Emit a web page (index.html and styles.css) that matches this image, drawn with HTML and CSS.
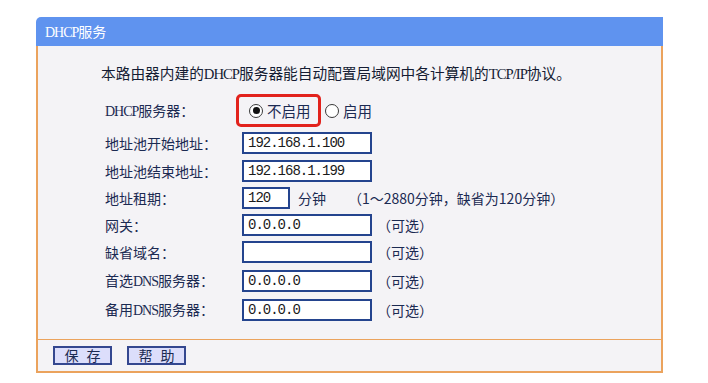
FILE: index.html
```html
<!DOCTYPE html>
<html lang="zh-CN">
<head>
<meta charset="utf-8">
<title>DHCP服务</title>
<link rel="stylesheet" href="styles.css">
</head>
<body>
<div class="panel">
  <div class="panel-head"><span class="lat">DHCP</span>服务</div>
  <div class="panel-body">
    <div class="content">
      <p class="desc">本路由器内建的<span class="lat">DHCP</span>服务器能自动配置局域网中各计算机的<span class="lat">TCP/IP</span>协议。</p>
      <div class="form">
        <div class="label"><span class="lat">DHCP</span>服务器：</div>
        <div class="radios">
          <div class="highlight">
            <span class="radio checked"></span><span class="radio-text">不启用</span>
          </div>
          <span class="radio"></span><span class="radio-text">启用</span>
        </div>

        <div class="label">地址池开始地址：</div>
        <div class="field"><span class="input">192.168.1.100</span></div>

        <div class="label">地址池结束地址：</div>
        <div class="field"><span class="input">192.168.1.199</span></div>

        <div class="label">地址租期：</div>
        <div class="field"><span class="input short">120</span><span class="unit">分钟</span><span class="note">（1～2880分钟，缺省为120分钟）</span></div>

        <div class="label">网关：</div>
        <div class="field"><span class="input">0.0.0.0</span><span class="opt">（可选）</span></div>

        <div class="label">缺省域名：</div>
        <div class="field"><span class="input"></span><span class="opt">（可选）</span></div>

        <div class="label">首选<span class="lat">DNS</span>服务器：</div>
        <div class="field"><span class="input">0.0.0.0</span><span class="opt">（可选）</span></div>

        <div class="label">备用<span class="lat">DNS</span>服务器：</div>
        <div class="field"><span class="input">0.0.0.0</span><span class="opt">（可选）</span></div>
      </div>
    </div>
    <div class="footer">
      <button class="btn">保存</button>
      <button class="btn">帮助</button>
    </div>
  </div>
</div>
</body>
</html>
```

FILE: styles.css
```css
html, body {
  margin: 0;
  padding: 0;
  background: #ffffff;
}

body {
  font-family: "Noto Sans CJK SC", "Noto Sans", sans-serif;
  color: #1b2a52;
}

.lat {
  font-family: "Liberation Serif", "Noto Sans CJK SC", serif;
  letter-spacing: -1px;
  font-size: 1em;
}

.panel {
  width: 627px;
  margin: 17px 0 0 36px;
}

.panel-head {
  height: 29px;
  line-height: 29px;
  background: #5f93ef;
  border-top-left-radius: 5px;
  color: #ffffff;
  font-size: 14px;
  padding-left: 9px;
}

.panel-body {
  background: #f4f3f6;
  border: 2px solid #eba35d;
  border-top: 0;
}

.content {
  padding: 16px 0 16.5px 0;
}

.desc {
  margin: 0;
  padding-left: 63px;
  font-size: 14.7px;
  line-height: 22px;
  color: #151c33;
}

.form {
  margin-top: 9px;
  padding-left: 67px;
  display: grid;
  grid-template-columns: 137px auto;
  row-gap: 5.3px;
  align-items: center;
}

.label {
  font-size: 14px;
  line-height: 22px;
}

.radios {
  display: flex;
  align-items: center;
  height: 33px;
  margin-left: -6px;
  font-size: 14.5px;
}

.highlight {
  display: flex;
  align-items: center;
  box-sizing: border-box;
  height: 33px;
  width: 85px;
  border: 3px solid #e2221c;
  border-radius: 5px;
  padding-left: 10px;
  margin-right: 4px;
}

.radio {
  box-sizing: border-box;
  width: 14px;
  height: 14px;
  border: 1px solid #3a3a3a;
  border-radius: 50%;
  background: #ffffff;
  display: flex;
  align-items: center;
  justify-content: center;
  flex: none;
}

.radio.checked::after {
  content: "";
  width: 7px;
  height: 7px;
  border-radius: 50%;
  background: #111111;
}

.radio-text {
  margin-left: 4px;
  line-height: 22px;
}

.field {
  display: flex;
  align-items: center;
  height: 22px;
}

.input {
  box-sizing: border-box;
  display: block;
  width: 130px;
  height: 22px;
  border: 2px solid #24448e;
  background: #ffffff;
  padding-left: 4px;
  font-family: "Liberation Mono", monospace;
  font-size: 14px;
  letter-spacing: -1px;
  line-height: 18px;
  color: #1a1a1a;
  flex: none;
}

.input.short {
  width: 48px;
}

.unit {
  margin-left: 8px;
  font-size: 14px;
}

.note {
  margin-left: 22px;
  font-size: 14px;
}

.opt {
  margin-left: 5px;
  font-size: 14px;
}

.footer {
  border-top: 1px solid #eba35d;
  padding: 6px 0 6px 15px;
  display: flex;
  gap: 15px;
}

.btn {
  box-sizing: border-box;
  width: 59px;
  height: 19px;
  padding: 0 0 0 8px;
  margin: 0;
  background: #dcdefb;
  border: 2px solid #34478f;
  border-radius: 0;
  font-family: "Noto Sans CJK SC", sans-serif;
  font-size: 14px;
  letter-spacing: 8px;
  line-height: 15px;
  color: #1b2a52;
}
```
